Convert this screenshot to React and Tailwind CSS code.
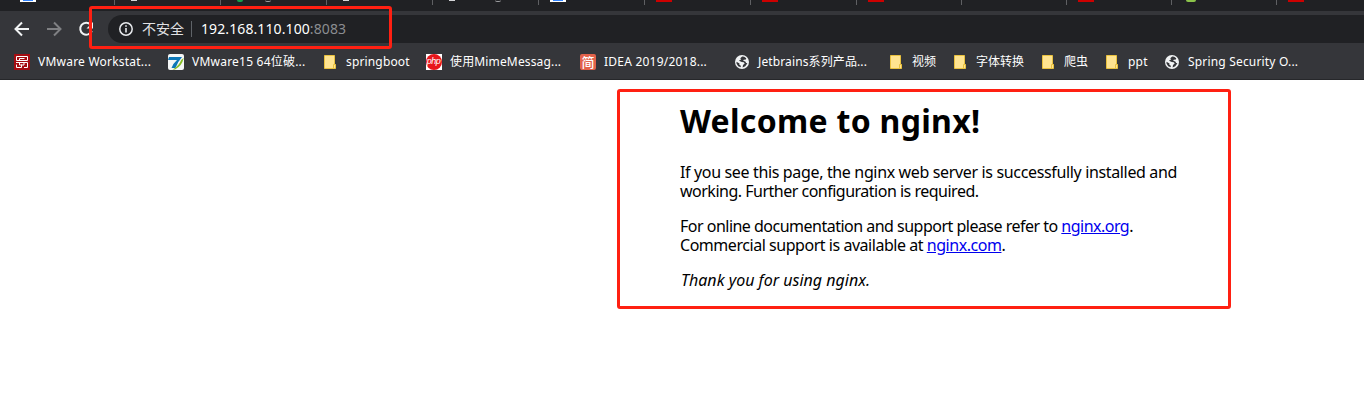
import React from "react";

const TABS = [
  { w: 106, icon: "paw" },
  { w: 106, icon: "globe" },
  { w: 106, icon: "green", tail: "ml-[22px]" },
  { w: 106, icon: "globe" },
  { w: 106, icon: "globe", tail: "ml-[40px]" },
  { w: 106, icon: "paw" },
  { w: 106, icon: "red" },
  { w: 106, icon: "red" },
  { w: 105, icon: "red" },
  { w: 105, icon: "none" },
  { w: 105, icon: "red" },
  { w: 105, icon: "lime" },
  { w: 76, icon: "red", last: true },
];

function TabIcon({ type }) {
  if (type === "red") return <span className="h-0.5 w-4 bg-[#cc0000]" />;
  if (type === "paw")
    return (
      <span className="flex h-0.5 w-4 justify-center bg-white">
        <span className="h-px w-2.5 bg-[#3385ff]" />
      </span>
    );
  if (type === "globe") return <span className="ml-[5px] h-px w-1.5 bg-[#d5d6d8]" />;
  if (type === "green") return <span className="ml-[5px] h-0.5 w-1.5 rounded-b-full bg-[#12a14b]" />;
  if (type === "lime") return <span className="ml-[3px] h-0.5 w-2.5 rounded-b-full bg-[#8bc34a]" />;
  return <span />;
}

function Globe() {
  return (
    <svg viewBox="0 0 16 16" className="size-4 shrink-0">
      <circle cx="8" cy="8" r="7" fill="#f1f3f4" />
      <path d="M8.2 2.4 6.3 4.2 7 5.5 4.9 6.8 7.8 8.1 9.8 8.2 10.7 9.6 9 11 8.6 13.4 11.3 12.3 13.4 9.2 12.2 8.9 11.3 7.4 9.2 6.8 9.7 5.7 11.9 5.6 12.2 4.3 10.2 2.8ZM2.5 7.7 5.5 9.6 5.2 10.6 6.8 11.8 6.7 13.3 4.2 12.2 2.5 9.5Z" fill="#35363a" />
    </svg>
  );
}

function Folder() {
  return (
    <svg viewBox="0 0 16 16" className="size-4 shrink-0">
      <path d="M2.5 1.5h10v9h1v4h-11z" fill="#ffe490" stroke="#e9c13e" />
      <path d="M11.5 14v-3.5h2" fill="none" stroke="#e9c13e" />
    </svg>
  );
}

function VmIcon() {
  return (
    <svg viewBox="0 0 16 16" className="size-4 shrink-0">
      <path d="M0 0h16v16H0z" fill="#a40d12" />
      <path d="M2.5 6.500v-4h11v4zM5.500 6.500v-2h5M2 8.500h11.500v5h-3.500M5.500 8.500v2.500h4.500v-2.500M2.500 10.500v3h5v-3" fill="none" stroke="#fff" />
    </svg>
  );
}

function SevenIcon() {
  return (
    <svg viewBox="0 0 16 16" className="size-4 shrink-0">
      <rect width="16" height="16" rx="2" fill="#f5f7f7" />
      <path d="M1 3H14Q9.500 8 7.500 14H3.500Q5 9.500 9 6H0Z" fill="#0d78b8" />
      <path d="M15.700 4Q14 12 7 15.500H4.500Q11 12 13.200 6Z" fill="#86bd25" />
    </svg>
  );
}

function PhpIcon() {
  return (
    <span className="flex size-4 shrink-0 items-center justify-center bg-white">
      <span className="flex size-4 items-center justify-center rounded-full bg-[#e8161b] pr-px pb-px font-['Liberation_Sans',sans-serif] text-[9px] leading-none tracking-[-0.5px] text-white italic">php</span>
    </span>
  );
}

function JianIcon() {
  return (
    <span className="flex size-4 shrink-0 items-center justify-center rounded-[2px] bg-[#e2624b] font-['Noto_Sans_CJK_SC',sans-serif] text-[13px] leading-none font-medium text-white">简</span>
  );
}

const BOOKMARKS = [
  { icon: VmIcon, text: "VMware Workstat...", w: "w-[154px]", t: "tracking-[0.22px]" },
  { icon: SevenIcon, text: "VMware15 64位破...", w: "w-[154px]", t: "tracking-[0.22px]" },
  { icon: Folder, text: "springboot", w: "w-[104px]", t: "tracking-[0.15px]" },
  { icon: PhpIcon, text: "使用MimeMessag...", w: "w-[154px]", t: "tracking-[0.15px]" },
  { icon: JianIcon, text: "IDEA 2019/2018...", w: "w-[154px]", t: "tracking-[0.22px]" },
  { icon: Globe, text: "Jetbrains系列产品...", w: "w-[154px]", t: "tracking-[0.12px]" },
  { icon: Folder, text: "视频", w: "w-[64px]", t: "tracking-[0px]" },
  { icon: Folder, text: "字体转换", w: "w-[88px]", t: "tracking-[0px]" },
  { icon: Folder, text: "爬虫", w: "w-[64px]", t: "tracking-[0px]" },
  { icon: Folder, text: "ppt", w: "w-[60px]", t: "tracking-[0.2px]" },
  { icon: Globe, text: "Spring Security O...", w: "w-[154px]", t: "tracking-[0.18px]" },
];

function TabStrip() {
  return (
    <div className="flex h-[11px] overflow-hidden bg-[#202124] pl-5">
      {TABS.map((tab, i) => (
        <div key={i} className="relative flex h-[5px] shrink-0" style={{ width: tab.w }}>
          <TabIcon type={tab.icon} />
          {tab.tail && <span className={`h-0.5 w-1.5 rounded-b-full border-b border-[#9a9b9e] ${tab.tail}`} />}
          {!tab.last && <span className="absolute right-[11px] h-[5px] w-px bg-[#5f6063]" />}
        </div>
      ))}
    </div>
  );
}

function Toolbar() {
  return (
    <div className="flex h-[36px] items-center bg-[#35363a] pl-[14px]">
      <svg viewBox="0 0 16 16" className="size-4 shrink-0" fill="none" stroke="#f1f3f4" strokeWidth="2">
        <path d="M15 8H2.500M8 1.500 1.500 8 8 14.500" />
      </svg>
      <svg viewBox="0 0 16 16" className="ml-4 size-4 shrink-0" fill="none" stroke="#7f8083" strokeWidth="2">
        <path d="M1 8h12.500M8 1.500 14.500 8 8 14.500" />
      </svg>
      <svg viewBox="0 0 16 16" className="ml-4 size-4 shrink-0">
        <path d="M12.700 3.700A6 6 0 1 0 13.800 10" fill="none" stroke="#f1f3f4" strokeWidth="2" />
        <path d="M15 1v6.500H8.500Z" fill="#f1f3f4" />
      </svg>
      <div className="ml-[14px] flex h-7 w-[1286px] shrink-0 items-center rounded-l-full bg-[#202124] pl-[11px]">
        <svg viewBox="0 0 14 14" className="size-[14px] shrink-0" fill="none" stroke="#e8eaed">
          <circle cx="7" cy="7" r="6.200" strokeWidth="1.500" />
          <path d="M7 6v4.500M7 3.300v1.500" strokeWidth="1.600" />
        </svg>
        <span className="ml-[9px] w-[49px] text-[14px] leading-5 text-[#e0e1e4]">不安全</span>
        <span className="h-4 w-px bg-[#5f6368]" />
        <span className="ml-[9px] text-[14px] leading-5 tracking-[0.1px] whitespace-nowrap text-white">
          192.168.110.100<span className="text-[#8b8d91]">:8083</span>
        </span>
      </div>
    </div>
  );
}

function BookmarksBar() {
  return (
    <div className="flex h-[33px] items-center border-b border-[#26272a] bg-[#35363a] pt-px pb-1 pl-[14px]">
      {BOOKMARKS.map(({ icon: Icon, text, w, t }) => (
        <div key={text} className={`flex shrink-0 items-center gap-2 ${w}`}>
          <Icon />
          <span className={`text-[12px] leading-4 whitespace-nowrap text-white ${t}`}>{text}</span>
        </div>
      ))}
    </div>
  );
}

export default function App() {
  return (
    <div className="relative h-[408px] w-[1364px] overflow-hidden bg-white font-['Noto_Sans','Noto_Sans_CJK_SC',sans-serif]">
      <TabStrip />
      <Toolbar />
      <BookmarksBar />
      <div className="absolute top-[6px] left-[89px] h-[43px] w-[303px] rounded-[3px] border-[3px] border-[#ff2012]" />
      <main className="mt-[9px] ml-[617px] h-[220px] w-[614px] rounded-[3px] border-[3px] border-[#ff2012] pt-[9px] pl-[60px] text-[16px] leading-[19px] whitespace-nowrap text-black">
        <h1 className="text-[32px] leading-[39px] font-bold tracking-[0.3px]">Welcome to nginx!</h1>
        <p className="mt-[23px]">
          <span className="tracking-[-0.35px]">If you see this page, the nginx web server is successfully installed and</span>
          <br />
          <span className="tracking-[-0.5px]">working. Further configuration is required.</span>
        </p>
        <p className="mt-4">
          <span className="tracking-[-0.51px]">For online documentation and support please refer to <a className="text-[#0000ee] underline">nginx.org</a>.</span>
          <br />
          <span className="tracking-[-0.46px]">Commercial support is available at <a className="text-[#0000ee] underline">nginx.com</a>.</span>
        </p>
        <p className="mt-4 pl-px italic">Thank you for using nginx.</p>
      </main>
    </div>
  );
}
